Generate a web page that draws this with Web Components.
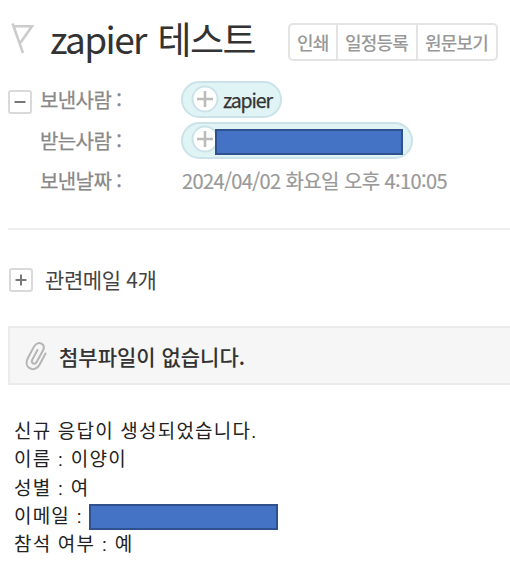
<!DOCTYPE html>
<html lang="ko">
<head>
<meta charset="utf-8">
<title>zapier 테스트</title>
<style>
    body {
        margin: 0;
        background: #fff;
        overflow: hidden;
        font-family: "Noto Sans CJK KR", "Noto Sans CJK JP", sans-serif;
    }
</style>
</head>
<body>
<mail-view>
    <mail-header slot="header">
        <span slot="title">zapier 테스트</span>
        <tool-buttons slot="tools">
            <span>인쇄</span>
            <span>일정등록</span>
            <span>원문보기</span>
        </tool-buttons>
    </mail-header>
    <mail-details slot="details">
        <fold-box slot="fold" open></fold-box>
        <span slot="label">보낸사람 :</span>
        <address-chip slot="value">zapier</address-chip>
        <span slot="label">받는사람 :</span>
        <address-chip slot="value"><redacted-bar></redacted-bar></address-chip>
        <span slot="label">보낸날짜 :</span>
        <span slot="value" class="date">2024/04/02 화요일 오후 4:10:05</span>
    </mail-details>
    <related-mail slot="related">관련메일 4개</related-mail>
    <attachment-bar slot="attachment">첨부파일이 없습니다.</attachment-bar>
    <mail-body slot="body">
        <div>신규 응답이 생성되었습니다.</div>
        <div>이름 : 이양이</div>
        <div>성별 : 여</div>
        <div>이메일 :<redacted-bar></redacted-bar></div>
        <div>참석 여부 : 예</div>
    </mail-body>
</mail-view>

<script>
'use strict';

class BaseElement extends HTMLElement {
    constructor(html)
    {
        super();
        this.attachShadow({ mode: "open" }).innerHTML = html;
    }
}

class MailView extends BaseElement {
    constructor()
    {
        super(`
            <style>
                :host {
                    display: flex;
                    flex-direction: column;
                    height: 571px;
                    padding-left: 8px;
                    box-sizing: border-box;
                }
            </style>
            <slot name="header"></slot>
            <slot name="details"></slot>
            <slot name="related"></slot>
            <slot name="attachment"></slot>
            <slot name="body"></slot>
        `);
    }
}

class MailHeader extends BaseElement {
    constructor()
    {
        super(`
            <style>
                :host {
                    display: flex;
                    height: 79px;
                    box-sizing: border-box;
                }

                svg {
                    flex: none;
                    width: 28px;
                    height: 34px;
                    margin-top: 22px;
                }

                h1 {
                    flex: none;
                    width: 238px;
                    margin: 10px 0 0 14px;
                    font-size: 37px;
                    font-weight: 400;
                    line-height: 56px;
                    letter-spacing: -1.6px;
                    word-spacing: 3px;
                    white-space: nowrap;
                    color: #333;
                }
            </style>
            <svg viewBox="0 0 28 34" fill="none" stroke="#ccc" stroke-width="2.6">
                <path d="M4.6 1.5 15 31M5 4.2H24L12.6 20.5"/>
            </svg>
            <h1><slot name="title"></slot></h1>
            <slot name="tools"></slot>
        `);
    }
}

class ToolButtons extends BaseElement {
    constructor()
    {
        super(`
            <style>
                :host {
                    display: grid;
                    grid-template-columns: 48px 80px 78px;
                    flex: none;
                    width: 210px;
                    height: 38px;
                    margin-top: 23px;
                    box-sizing: border-box;
                    border: 2px solid #e4e4e4;
                    border-radius: 5px;
                    font-size: 18px;
                    font-weight: 500;
                    line-height: 34px;
                    letter-spacing: -0.8px;
                    color: #999;
                }

                ::slotted(span) {
                    padding-left: 7px;
                    border-right: 2px solid #e4e4e4;
                    white-space: nowrap;
                }

                ::slotted(span:last-child) {
                    border-right: 0;
                }
            </style>
            <slot></slot>
        `);
    }
}

class FoldBox extends BaseElement {
    constructor()
    {
        super(`
            <style>
                :host {
                    display: block;
                    width: 24px;
                    height: 24px;
                    box-sizing: border-box;
                    border: 2px solid #d9d9d9;
                    border-radius: 3px;
                }

                svg {
                    display: block;
                    width: 20px;
                    height: 20px;
                }

                :host([open]) .bar {
                    display: none;
                }
            </style>
            <svg viewBox="0 0 20 20" stroke="#777" stroke-width="2">
                <path d="M4.5 10H15.5"/>
                <path class="bar" d="M10 4.5V15.5"/>
            </svg>
        `);
    }
}

class MailDetails extends BaseElement {
    constructor()
    {
        super(`
            <style>
                :host {
                    display: grid;
                    grid-template-columns: 32px 141px 1fr;
                    height: 151px;
                    box-sizing: border-box;
                    border-bottom: 2px solid #eee;
                    font-size: 20px;
                    line-height: 41px;
                    white-space: nowrap;
                    color: #888;
                }

                .fold {
                    padding-top: 11px;
                }

                .labels, .values {
                    display: grid;
                    grid-auto-rows: 40.5px;
                    align-content: start;
                }

                .labels {
                    letter-spacing: -0.6px;
                    -webkit-text-stroke: 0.25px #888;
                }

                ::slotted(.date) {
                    padding-left: 1px;
                    letter-spacing: -0.6px;
                    -webkit-text-stroke: 0.2px #999;
                    color: #999;
                }
            </style>
            <div class="fold"><slot name="fold"></slot></div>
            <div class="labels"><slot name="label"></slot></div>
            <div class="values"><slot name="value"></slot></div>
        `);
    }
}

class AddressChip extends BaseElement {
    constructor()
    {
        super(`
            <style>
                :host {
                    display: flex;
                    align-items: center;
                    justify-self: start;
                    height: 37px;
                    margin-top: 2px;
                    padding: 0 8px 0 8px;
                    box-sizing: border-box;
                    border: 2px solid #cbe3e8;
                    border-radius: 19px;
                    background: #e0f4f6;
                    font-size: 19.5px;
                    line-height: 33px;
                    letter-spacing: -1.1px;
                    -webkit-text-stroke: 0.25px #333;
                    color: #333;
                }

                svg {
                    flex: none;
                    width: 28px;
                    height: 28px;
                    margin: -2px 4px 0 0;
                }

                ::slotted(redacted-bar) {
                    width: 188px;
                    margin: 3px 0 0 -8px;
                }
            </style>
            <svg viewBox="0 0 28 28">
                <circle cx="14" cy="14" r="12.5" fill="#fff" stroke="#cbe3e8" stroke-width="2"/>
                <path d="M6 14H22M14 6V22" stroke="#bbb" stroke-width="2.6"/>
            </svg>
            <slot></slot>
        `);
    }
}

class RedactedBar extends BaseElement {
    constructor()
    {
        super(`
            <style>
                :host {
                    display: block;
                    flex: none;
                    height: 26px;
                    box-sizing: border-box;
                    border: 2px solid #2f528f;
                    background: #4472c4;
                }
            </style>
        `);
    }
}

class RelatedMail extends BaseElement {
    constructor()
    {
        super(`
            <style>
                :host {
                    display: flex;
                    align-items: center;
                    gap: 12px;
                    height: 96px;
                    padding: 3px 0 0 1px;
                    box-sizing: border-box;
                    font-size: 21px;
                    letter-spacing: -0.4px;
                    line-height: 30px;
                    color: #444;
                }

                .text {
                    margin-top: -2px;
                }
            </style>
            <fold-box></fold-box>
            <div class="text"><slot></slot></div>
        `);
    }
}

class AttachmentBar extends BaseElement {
    constructor()
    {
        super(`
            <style>
                :host {
                    display: flex;
                    align-items: center;
                    height: 59px;
                    padding: 0 0 0 15px;
                    box-sizing: border-box;
                    border: 2px solid #ebebeb;
                    border-right: 0;
                    background: #f6f6f6;
                    font-size: 21px;
                    font-weight: 500;
                    letter-spacing: 0;
                    color: #333;
                }

                svg {
                    width: 24px;
                    height: 30px;
                    margin-right: 10px;
                }
            </style>
            <svg viewBox="0 0 24 30" fill="none" stroke="#b5b5b5" stroke-width="2" stroke-linecap="round">
                <path d="M20.5 12.5 14.8 23.2C12.4 28 8 29.2 4.6 27.2S.8 21 3 16.8L9 5.6C10.8 2.3 14 1.2 16.5 2.6S19.4 6.8 17.8 9.8L11.8 20.8C10.8 22.6 9.4 23.2 8 22.4S6.5 20 7.5 18.2L12.5 9"/>
            </svg>
            <slot></slot>
        `);
    }
}

class MailBody extends BaseElement {
    constructor()
    {
        super(`
            <style>
                :host {
                    display: grid;
                    grid-auto-rows: 28.3px;
                    align-content: start;
                    padding: 33px 0 0 6px;
                    font-family: "Liberation Sans", "Noto Sans CJK KR", "Noto Sans CJK JP", sans-serif;
                    font-size: 19px;
                    line-height: 28px;
                    letter-spacing: 1.2px;
                    color: #222;
                }

                ::slotted(div) {
                    display: flex;
                    align-items: center;
                    white-space: nowrap;
                }
            </style>
            <slot></slot>
        `);
        this.shadowRoot.querySelector('slot').addEventListener('slotchange', () => {
            const bar = this.querySelector('redacted-bar');
            bar.style.width = '189px';
            bar.style.marginLeft = '6px';
        });
    }
}

customElements.define('mail-view', MailView);
customElements.define('mail-header', MailHeader);
customElements.define('tool-buttons', ToolButtons);
customElements.define('fold-box', FoldBox);
customElements.define('mail-details', MailDetails);
customElements.define('address-chip', AddressChip);
customElements.define('redacted-bar', RedactedBar);
customElements.define('related-mail', RelatedMail);
customElements.define('attachment-bar', AttachmentBar);
customElements.define('mail-body', MailBody);
</script>
</body>
</html>
